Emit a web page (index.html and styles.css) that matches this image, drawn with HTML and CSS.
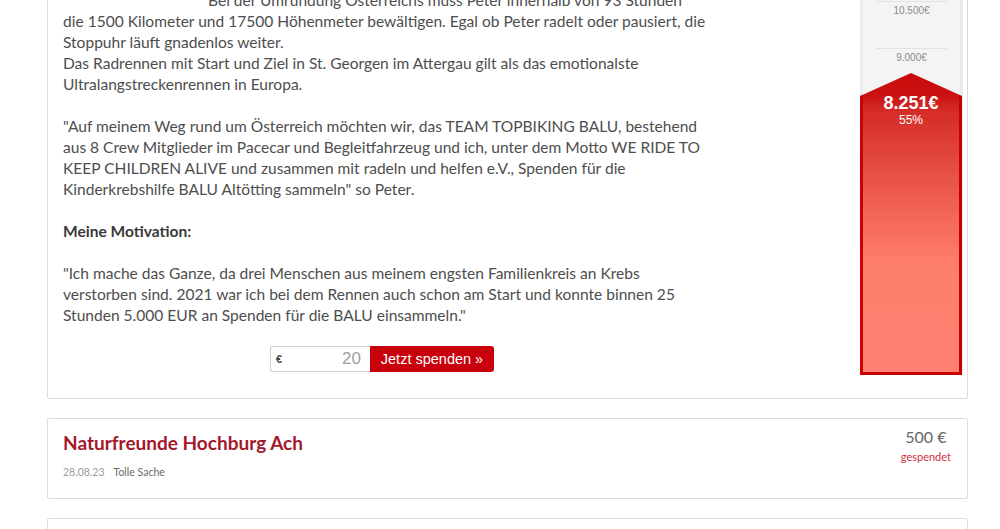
FILE: index.html
```html
<!DOCTYPE html>
<html lang="de">
<head>
<meta charset="utf-8">
<title>Spendenaktion</title>
<link rel="stylesheet" href="styles.css">
</head>
<body>
<div class="page">
  <div class="card project">
    <div class="story">
      <p class="lead">Bei der Umrundung Österreichs muss Peter innerhalb von 93 Stunden<br>die 1500 Kilometer und 17500 Höhenmeter bewältigen. Egal ob Peter radelt oder pausiert, die<br>Stoppuhr läuft gnadenlos weiter.<br>Das Radrennen mit Start und Ziel in St. Georgen im Attergau gilt als das emotionalste<br>Ultralangstreckenrennen in Europa.</p>
      <p>"Auf meinem Weg rund um Österreich möchten wir, das TEAM TOPBIKING BALU, bestehend<br>aus 8 Crew Mitglieder im Pacecar und Begleitfahrzeug und ich, unter dem Motto WE RIDE TO<br>KEEP CHILDREN ALIVE und zusammen mit radeln und helfen e.V., Spenden für die<br>Kinderkrebshilfe BALU Altötting sammeln" so Peter.</p>
      <p><strong>Meine Motivation:</strong></p>
      <p>"Ich mache das Ganze, da drei Menschen aus meinem engsten Familienkreis an Krebs<br>verstorben sind. 2021 war ich bei dem Rennen auch schon am Start und konnte binnen 25<br>Stunden 5.000 EUR an Spenden für die BALU einsammeln."</p>
      <form class="donate">
        <label class="amount">
          <span class="currency">€</span>
          <input type="text" value="20" aria-label="Betrag">
        </label>
        <button type="button" class="btn-donate">Jetzt spenden »</button>
      </form>
    </div>
    <div class="thermo-col">
      <div class="thermo">
        <div class="tick" style="bottom:374px"><span>10.500€</span></div>
        <div class="tick" style="bottom:327px"><span>9.000€</span></div>
        <div class="fill" style="height:302px">
          <div class="fill-value">8.251€</div>
          <div class="fill-pct">55%</div>
        </div>
      </div>
    </div>
  </div>

  <div class="card donation">
    <div class="donor">
      <h3 class="donor-name">Naturfreunde Hochburg Ach</h3>
      <div class="meta"><span class="date">28.08.23</span><span class="comment">Tolle Sache</span></div>
    </div>
    <div class="sum">
      <div class="sum-value">500 €</div>
      <div class="sum-label">gespendet</div>
    </div>
  </div>

  <div class="card donation next"></div>
</div>
</body>
</html>
```

FILE: styles.css
```css
* { box-sizing: border-box; }
html, body { margin: 0; padding: 0; background: #fff; }
body {
  font-family: "Lato", "Liberation Sans", sans-serif;
  color: #4e4e4e;
  overflow: hidden;
}
.page {
  width: 921px;
  margin: -31px 0 0 47px;
}
.card {
  border: 1px solid #dcdcdc;
  border-radius: 2px;
  background: #fff;
  margin-bottom: 19px;
}
.project {
  display: flex;
  padding-left: 15px;
  padding-right: 4px;
}
.story {
  width: 644px;
  padding: 20px 0 26px;
  font-size: 15.55px;
  line-height: 21px;
}
.story p { margin: 0 0 21px; white-space: nowrap; }
.story p:last-of-type { margin-bottom: 0; }
.story .lead { text-indent: 145px; }
.story strong { color: #3a3a3a; font-weight: 700; }

.donate {
  display: flex;
  justify-content: center;
  margin-top: 20px;
  height: 26px;
  padding-right: 6px;
}
.amount {
  display: flex;
  align-items: center;
  width: 100px;
  height: 26px;
  border: 1px solid #cfcfcf;
  border-right: none;
  border-radius: 3px 0 0 3px;
  padding: 0 9px 0 5px;
  background: #fff;
}
.currency {
  font-family: "Liberation Sans", Arial, sans-serif;
  font-size: 11px;
  font-weight: 700;
  color: #444;
}
.amount input {
  flex: 1;
  min-width: 0;
  border: none;
  outline: none;
  padding: 0;
  text-align: right;
  font-family: "Liberation Sans", Arial, sans-serif;
  font-size: 17px;
  color: #a0a0a0;
  background: transparent;
}
.btn-donate {
  width: 124px;
  height: 26px;
  border: none;
  border-radius: 0 3px 3px 0;
  background: #c8000b;
  color: #fff;
  font-family: "Liberation Sans", Arial, sans-serif;
  font-size: 14.5px;
  padding: 0;
}

.thermo-col {
  margin-left: auto;
  width: 103px;
  padding-bottom: 23px;
}
.thermo {
  position: relative;
  height: 100%;
  background: #f4f4f4;
  border-left: 3px solid #ebebeb;
  border-right: 3px solid #ebebeb;
}
.tick {
  position: absolute;
  left: 13px;
  right: 13px;
  height: 12px;
  border-top: 1px solid #e2e2e2;
  transform: translateY(100%);
}
.tick span {
  position: absolute;
  left: 0;
  right: 0;
  top: 3px;
  text-align: center;
  font-family: "Liberation Sans", Arial, sans-serif;
  font-size: 10px;
  color: #8a8a8a;
}
.fill {
  position: absolute;
  left: -3px;
  right: -2px;
  bottom: 0;
  border: 3px solid #c70000;
  border-top: none;
  clip-path: polygon(50% 0, 100% 23px, 100% 100%, 0 100%, 0 23px);
  background: linear-gradient(#c80a0a 0, #cc1212 23px, #d42a26 36px, #e44a40 90px, #f56a5c 150px, #fe7e6e 190px, #ff8070 100%);
  text-align: center;
  color: #fff;
  font-family: "Liberation Sans", Arial, sans-serif;
  padding-top: 20px;
}
.fill-value {
  font-size: 18px;
  font-weight: 700;
  line-height: 20px;
}
.fill-pct {
  font-size: 12px;
  line-height: 14px;
}

.donation {
  display: flex;
  justify-content: space-between;
  padding: 12px 16px 18px 15px;
  height: 81px;
}
.donor-name {
  margin: 0;
  font-size: 19px;
  line-height: 24px;
  font-weight: 700;
  color: #a3182c;
}
.meta {
  margin-top: 10px;
  font-size: 10.5px;
  line-height: 14px;
}
.meta .date { color: #9a9a9a; margin-right: 9px; }
.meta .comment { color: #6a6a6a; }
.sum {
  text-align: center;
  margin-top: -4px;
}
.sum-value {
  font-size: 16px;
  line-height: 20px;
  color: #666;
}
.sum-label {
  margin-top: 3px;
  font-size: 11px;
  line-height: 14px;
  color: #d0303f;
}
.next { height: 40px; }
```
